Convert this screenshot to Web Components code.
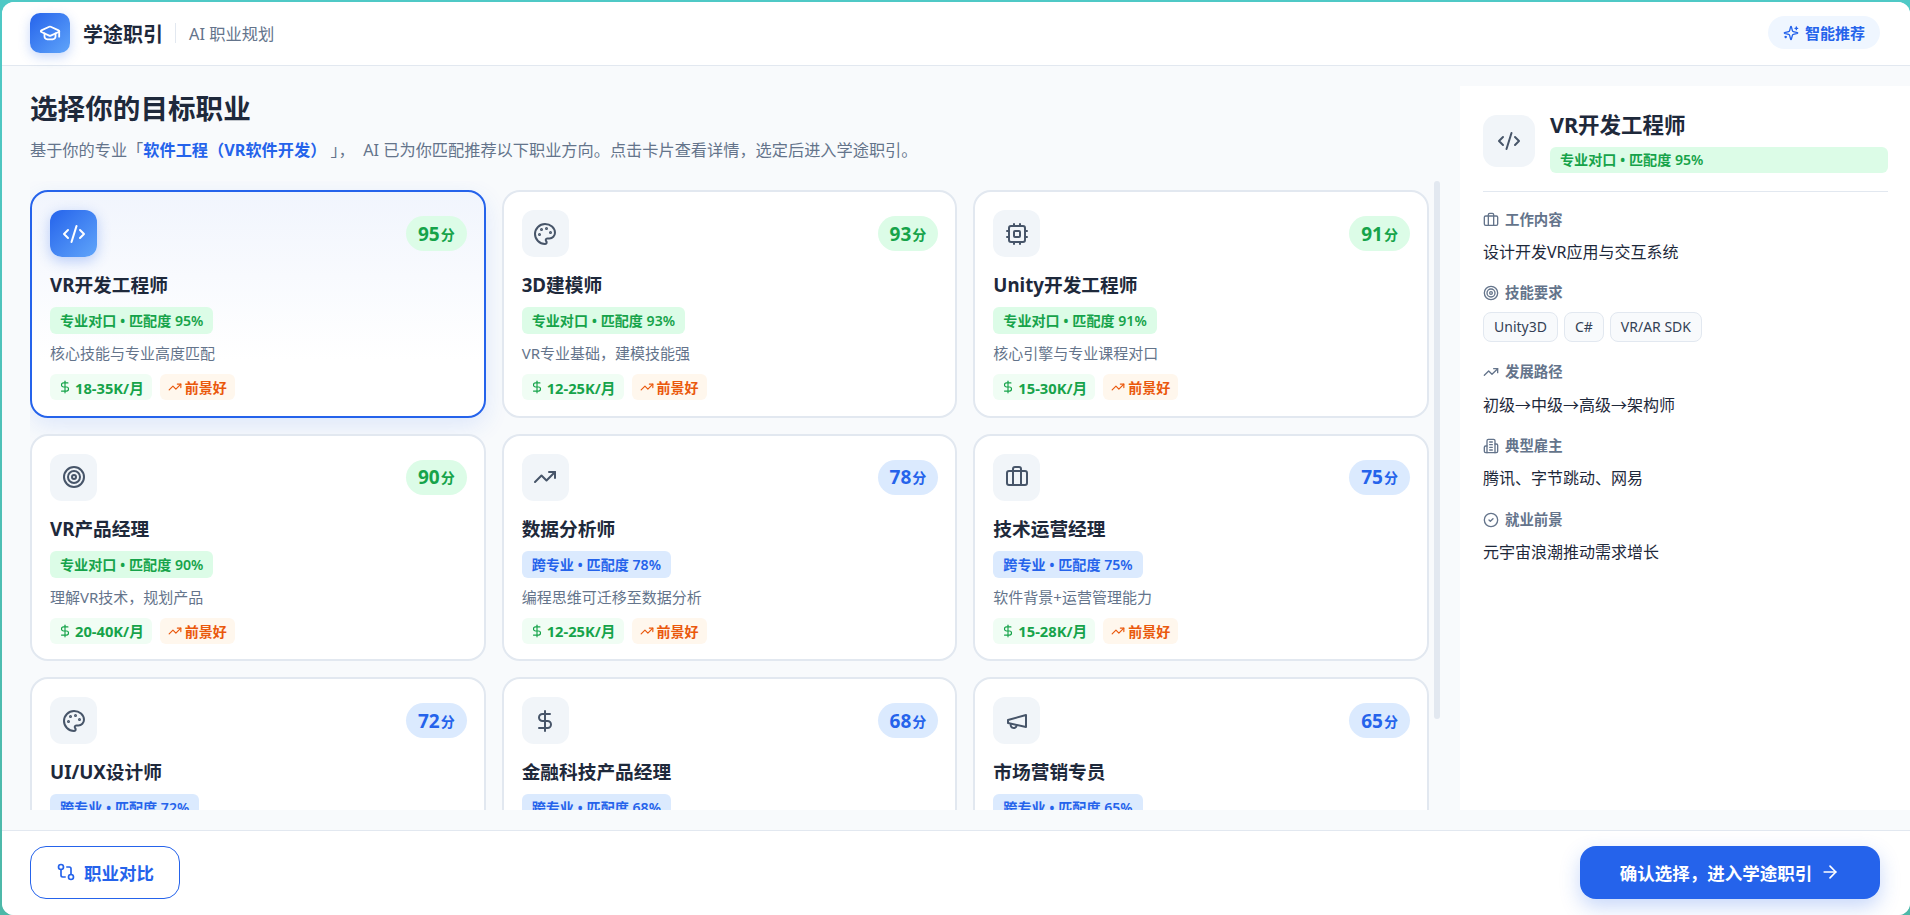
<!DOCTYPE html>
<html lang="zh-CN">
<head>
<meta charset="utf-8">
<title>学途职引</title>
<style>
  html, body { height: 100%; }
  body {
    margin: 0;
    padding: 1.5px 0 0 1.5px;
    box-sizing: border-box;
    overflow: hidden;
    background: linear-gradient(180deg, #4fc9c6, #4db8a8);
    font-family: "Noto Sans", "Noto Sans CJK SC", sans-serif;
  }
</style>
</head>
<body>
<app-shell>
  <top-bar slot="top"></top-bar>
  <career-picker slot="left"></career-picker>
  <detail-panel slot="right"></detail-panel>
  <bottom-bar slot="bottom"></bottom-bar>
</app-shell>

<script>
"use strict"

const ICONS = {
  code: `<path d="m18 16 4-4-4-4"/><path d="m6 8-4 4 4 4"/><path d="m14.5 4-5 16"/>`,
  palette: `<circle cx="13.5" cy="6.5" r=".5" fill="currentColor"/><circle cx="17.5" cy="10.5" r=".5" fill="currentColor"/><circle cx="8.5" cy="7.5" r=".5" fill="currentColor"/><circle cx="6.5" cy="12.5" r=".5" fill="currentColor"/><path d="M12 2C6.5 2 2 6.5 2 12s4.5 10 10 10c.926 0 1.648-.746 1.648-1.688 0-.437-.18-.835-.437-1.125-.29-.289-.438-.652-.438-1.125a1.64 1.64 0 0 1 1.668-1.668h1.996c3.051 0 5.555-2.503 5.555-5.554C21.965 6.012 17.461 2 12 2z"/>`,
  cpu: `<rect width="16" height="16" x="4" y="4" rx="2"/><rect width="6" height="6" x="9" y="9" rx="1"/><path d="M15 2v2"/><path d="M15 20v2"/><path d="M2 15h2"/><path d="M2 9h2"/><path d="M20 15h2"/><path d="M20 9h2"/><path d="M9 2v2"/><path d="M9 20v2"/>`,
  target: `<circle cx="12" cy="12" r="10"/><circle cx="12" cy="12" r="6"/><circle cx="12" cy="12" r="2"/>`,
  trend: `<polyline points="22 7 13.5 15.5 8.5 10.5 2 17"/><polyline points="16 7 22 7 22 13"/>`,
  briefcase: `<path d="M16 20V4a2 2 0 0 0-2-2h-4a2 2 0 0 0-2 2v16"/><rect width="20" height="14" x="2" y="6" rx="2"/>`,
  dollar: `<line x1="12" x2="12" y1="2" y2="22"/><path d="M17 5H9.5a3.5 3.5 0 0 0 0 7h5a3.5 3.5 0 0 1 0 7H6"/>`,
  megaphone: `<path d="m3 11 18-5v12L3 14v-3z"/><path d="M11.6 16.8a3 3 0 1 1-5.8-1.6"/>`,
  cap: `<path d="M21.42 10.922a1 1 0 0 0-.019-1.838L12.83 5.18a2 2 0 0 0-1.66 0L2.6 9.08a1 1 0 0 0 0 1.832l8.57 3.908a2 2 0 0 0 1.66 0z"/><path d="M22 10v6"/><path d="M6 12.5V16a6 3 0 0 0 12 0v-3.5"/>`,
  sparkles: `<path d="M9.937 15.5A2 2 0 0 0 8.5 14.063l-6.135-1.582a.5.5 0 0 1 0-.962L8.5 9.936A2 2 0 0 0 9.937 8.5l1.582-6.135a.5.5 0 0 1 .963 0L14.063 8.5A2 2 0 0 0 15.5 9.937l6.135 1.581a.5.5 0 0 1 0 .964L15.5 14.063a2 2 0 0 0-1.437 1.437l-1.582 6.135a.5.5 0 0 1-.963 0z"/><path d="M20 3v4"/><path d="M22 5h-4"/><path d="M4 17v2"/><path d="M5 18H3"/>`,
  building: `<path d="M6 22V4a2 2 0 0 1 2-2h8a2 2 0 0 1 2 2v18Z"/><path d="M6 12H4a2 2 0 0 0-2 2v6a2 2 0 0 0 2 2h2"/><path d="M18 9h2a2 2 0 0 1 2 2v9a2 2 0 0 1-2 2h-2"/><path d="M10 6h4"/><path d="M10 10h4"/><path d="M10 14h4"/><path d="M10 18h4"/>`,
  check: `<circle cx="12" cy="12" r="10"/><path d="m9 12 2 2 4-4"/>`,
  compare: `<circle cx="18" cy="18" r="3"/><circle cx="6" cy="6" r="3"/><path d="M13 6h3a2 2 0 0 1 2 2v7"/><path d="M11 18H8a2 2 0 0 1-2-2V9"/>`,
  arrow: `<path d="M5 12h14"/><path d="m12 5 7 7-7 7"/>`,
};

// the last row is cut off by the scroll area, only its top part shows
const CAREERS = [
  { title: "VR开发工程师", icon: "code", score: 95, kind: "专业对口", desc: "核心技能与专业高度匹配", salary: "18-35K/月", selected: true },
  { title: "3D建模师", icon: "palette", score: 93, kind: "专业对口", desc: "VR专业基础，建模技能强", salary: "12-25K/月" },
  { title: "Unity开发工程师", icon: "cpu", score: 91, kind: "专业对口", desc: "核心引擎与专业课程对口", salary: "15-30K/月" },
  { title: "VR产品经理", icon: "target", score: 90, kind: "专业对口", desc: "理解VR技术，规划产品", salary: "20-40K/月" },
  { title: "数据分析师", icon: "trend", score: 78, kind: "跨专业", desc: "编程思维可迁移至数据分析", salary: "12-25K/月" },
  { title: "技术运营经理", icon: "briefcase", score: 75, kind: "跨专业", desc: "软件背景+运营管理能力", salary: "15-28K/月" },
  { title: "UI/UX设计师", icon: "palette", score: 72, kind: "跨专业" },
  { title: "金融科技产品经理", icon: "dollar", score: 68, kind: "跨专业" },
  { title: "市场营销专员", icon: "megaphone", score: 65, kind: "跨专业" },
];

class UiIcon extends HTMLElement {
  connectedCallback() {
    const size = this.getAttribute("size") || 24;
    const stroke = this.getAttribute("stroke") || 2;
    this.attachShadow({ mode: "open" }).innerHTML = `
      <style>
        :host { display: inline-flex; flex: none; }
        svg { display: block; fill: none; stroke: currentColor; stroke-linecap: round; stroke-linejoin: round; }
      </style>
      <svg width="${size}" height="${size}" viewBox="0 0 24 24" stroke-width="${stroke}">${ICONS[this.getAttribute("name")]}</svg>
    `;
  }
}

class AppShell extends HTMLElement {
  constructor() {
    super();
    this.attachShadow({ mode: "open" }).innerHTML = `
      <style>
        :host {
          display: flex;
          flex-direction: column;
          height: 100%;
          background: #f8fafc;
          border-radius: 12px;
          overflow: hidden;
        }
        .middle { flex: 1; min-height: 0; display: flex; gap: 20px; padding: 20px 0 20px 28.5px; }
        .middle ::slotted(career-picker) { flex: 1; min-width: 0; }
      </style>
      <slot name="top"></slot>
      <div class="middle">
        <slot name="left"></slot>
        <slot name="right"></slot>
      </div>
      <slot name="bottom"></slot>
    `;
  }
}

class TopBar extends HTMLElement {
  constructor() {
    super();
    this.attachShadow({ mode: "open" }).innerHTML = `
      <style>
        :host {
          display: flex;
          align-items: center;
          height: 63.5px;
          flex: none;
          padding: 0 30px 0 28.5px;
          background: #fff;
          border-bottom: 1px solid #e2e8f0;
        }
        .logo {
          width: 40px; height: 40px;
          border-radius: 10px;
          display: flex; align-items: center; justify-content: center;
          color: #fff;
          background: linear-gradient(135deg, #2563eb, #60a5fa);
          box-shadow: 0 4px 12px rgba(37, 99, 235, .25);
        }
        .name { margin-left: 13px; font-size: 20px; font-weight: 700; color: #1e293b; }
        .sep { width: 1px; height: 20px; background: #e2e8f0; margin: 0 13px 0 12px; }
        .sub { font-size: 16.3px; color: #64748b; }
        .pill {
          margin: 0 0 1px auto;
          height: 33px;
          padding: 0 15px;
          display: flex; align-items: center; gap: 6px;
          border-radius: 17px;
          background: #eff6ff;
          color: #2563eb;
          font-size: 15px;
          font-weight: 600;
        }
      </style>
      <div class="logo"><ui-icon name="cap" size="22"></ui-icon></div>
      <div class="name">学途职引</div>
      <div class="sep"></div>
      <div class="sub">AI 职业规划</div>
      <div class="pill"><ui-icon name="sparkles" size="16"></ui-icon>智能推荐</div>
    `;
  }
}

class CareerCard extends HTMLElement {
  connectedCallback() {
    const score = this.getAttribute("score");
    const kind = this.getAttribute("kind");
    const salary = this.getAttribute("salary");
    const tone = kind === "跨专业" ? "blue" : "green";
    this.attachShadow({ mode: "open" }).innerHTML = `
      <style>
        :host {
          display: block;
          box-sizing: border-box;
          height: 227.5px;
          padding: 18px 17px 18px 18px;
          background: #fff;
          border: 2px solid #e2e8f0;
          border-radius: 18px;
        }
        :host([selected]) {
          border-color: #2563eb;
          background: linear-gradient(180deg, #f1f5fd, #fff 75%);
          box-shadow: 0 8px 24px rgba(37, 99, 235, .12);
        }
        .head { display: flex; align-items: center; justify-content: space-between; }
        .icon {
          width: 47px; height: 47px;
          border-radius: 12px;
          display: flex; align-items: center; justify-content: center;
          background: #f1f5f9;
          color: #475569;
        }
        :host([selected]) .icon {
          color: #fff;
          background: linear-gradient(135deg, #2563eb, #60a5fa);
          box-shadow: 0 4px 14px rgba(37, 99, 235, .3);
        }
        .score {
          height: 35px;
          padding: 0 12px;
          border-radius: 18px;
          display: flex; align-items: center;
          font-size: 19px;
          font-weight: 700;
        }
        .score small { font-size: 14px; font-weight: 600; margin-left: 1px; }
        .green { background: #dcfce7; color: #16a34a; }
        .blue { background: #dbeafe; color: #2563eb; }
        .title { margin-top: 15px; font-size: 18.7px; line-height: 26px; font-weight: 700; color: #1e293b; }
        .badge {
          display: inline-block;
          margin-top: 9px;
          height: 27px;
          line-height: 27px;
          padding: 0 10px;
          border-radius: 6px;
          font-size: 14.1px;
          font-weight: 600;
        }
        .desc { margin-top: 8px; font-size: 15px; line-height: 22px; color: #64748b; }
        .tags { margin-top: 10px; display: flex; gap: 8px; }
        .tag {
          height: 26px;
          border-radius: 6px;
          padding: 0 8px;
          display: flex; align-items: center; gap: 3px;
          font-size: 14px;
          font-weight: 700;
        }
        .salary { background: #f0fdf4; color: #16a34a; font-size: 14.7px; }
        .trend { background: #fff7ed; color: #ea580c; }
      </style>
      <div class="head">
        <div class="icon"><ui-icon name="${this.getAttribute("icon")}" size="24"></ui-icon></div>
        <div class="score ${tone}">${score}<small>分</small></div>
      </div>
      <div class="title"><slot name="title"></slot></div>
      <div class="badge ${tone}">${kind} • 匹配度 ${score}%</div>
      ${salary ? `
      <div class="desc"><slot name="desc"></slot></div>
      <div class="tags">
        <div class="tag salary"><ui-icon name="dollar" size="14"></ui-icon>${salary}</div>
        <div class="tag trend"><ui-icon name="trend" size="14"></ui-icon>前景好</div>
      </div>` : ""}
    `;
  }
}

class CareerPicker extends HTMLElement {
  constructor() {
    super();
    const cards = CAREERS.map(c => `
      <career-card icon="${c.icon}" score="${c.score}" kind="${c.kind}" ${c.salary ? `salary="${c.salary}"` : ""} ${c.selected ? "selected" : ""}>
        <span slot="title">${c.title}</span>
        ${c.desc ? `<span slot="desc">${c.desc}</span>` : ""}
      </career-card>`).join("");
    this.attachShadow({ mode: "open" }).innerHTML = `
      <style>
        :host { display: flex; flex-direction: column; min-height: 0; }
        h1 { margin: 2px 0 0; font-size: 27.6px; line-height: 40px; font-weight: 700; color: #1e293b; }
        p { margin: 10px 0 0; font-size: 16.2px; line-height: 24px; color: #64748b; white-space: pre-wrap; }
        p b { color: #2563eb; font-weight: 700; }
        .wrap { flex: 1; min-height: 0; margin-top: 19px; position: relative; display: flex; }
        .scroll {
          flex: 1;
          min-width: 0;
          padding: 9px 11px 12px 0;
          overflow-y: scroll;
          scrollbar-width: none;
        }
        .thumb { position: absolute; top: 0; right: 0; width: 6px; height: 538px; border-radius: 3px; background: #e2e8f0; }
        .grid { display: grid; grid-template-columns: repeat(3, 1fr); gap: 16px; }
      </style>
      <h1>选择你的目标职业</h1>
      <p>基于你的专业「<b>软件工程（VR软件开发）</b> 」，  AI 已为你匹配推荐以下职业方向。点击卡片查看详情，选定后进入学途职引。</p>
      <div class="wrap">
        <div class="scroll"><div class="grid">${cards}</div></div>
        <div class="thumb"></div>
      </div>
    `;
  }
}

class DetailSection extends HTMLElement {
  connectedCallback() {
    this.attachShadow({ mode: "open" }).innerHTML = `
      <style>
        :host { display: block; margin-bottom: 19.4px; }
        .label {
          display: flex; align-items: center; gap: 6px;
          font-size: 14.4px; line-height: 20px; font-weight: 600;
          color: #64748b;
        }
        .body { margin-top: 10px; font-size: 16px; line-height: 24px; color: #1e293b; }
      </style>
      <div class="label"><ui-icon name="${this.getAttribute("icon")}" size="16"></ui-icon>${this.getAttribute("label")}</div>
      <div class="body"><slot></slot></div>
    `;
  }
}

class SkillChip extends HTMLElement {
  constructor() {
    super();
    this.attachShadow({ mode: "open" }).innerHTML = `
      <style>
        :host {
          display: flex; align-items: center;
          height: 30px; box-sizing: border-box;
          padding: 0 10px;
          border: 1px solid #e2e8f0;
          border-radius: 8px;
          background: #f8fafc;
          font-size: 14px;
          color: #334155;
        }
      </style>
      <slot></slot>
    `;
  }
}

class DetailPanel extends HTMLElement {
  constructor() {
    super();
    this.attachShadow({ mode: "open" }).innerHTML = `
      <style>
        :host {
          display: block;
          flex: none;
          box-sizing: border-box;
          width: 450px;
          padding: 29px 22px 20px 23px;
          background: #fff;
        }
        .head {
          display: flex; gap: 15px;
          padding-bottom: 18px;
          margin-bottom: 18px;
          border-bottom: 1px solid #e2e8f0;
        }
        .icon {
          flex: none;
          width: 52px; height: 52px;
          border-radius: 14px;
          display: flex; align-items: center; justify-content: center;
          background: #f1f5f9;
          color: #475569;
        }
        .info { flex: 1; min-width: 0; }
        .title { font-size: 21.5px; line-height: 20px; font-weight: 700; color: #1e293b; }
        .badge {
          margin-top: 12px;
          height: 26px; line-height: 26px;
          padding: 0 10px;
          border-radius: 6px;
          background: #dcfce7; color: #16a34a;
          font-size: 14.1px; font-weight: 600;
        }
        .chips { display: flex; gap: 6px; margin-top: -1px; }
        .cjk { font-family: "Noto Sans CJK SC", sans-serif; }
      </style>
      <div class="head">
        <div class="icon"><ui-icon name="code" size="24"></ui-icon></div>
        <div class="info">
          <div class="title">VR开发工程师</div>
          <div class="badge">专业对口 • 匹配度 95%</div>
        </div>
      </div>
      <detail-section icon="briefcase" label="工作内容">设计开发VR应用与交互系统</detail-section>
      <detail-section icon="target" label="技能要求">
        <div class="chips"><skill-chip>Unity3D</skill-chip><skill-chip>C#</skill-chip><skill-chip>VR/AR SDK</skill-chip></div>
      </detail-section>
      <detail-section icon="trend" label="发展路径"><span class="cjk">初级→中级→高级→架构师</span></detail-section>
      <detail-section icon="building" label="典型雇主">腾讯、字节跳动、网易</detail-section>
      <detail-section icon="check" label="就业前景">元宇宙浪潮推动需求增长</detail-section>
    `;
  }
}

class BottomBar extends HTMLElement {
  constructor() {
    super();
    this.attachShadow({ mode: "open" }).innerHTML = `
      <style>
        :host {
          display: flex;
          align-items: center;
          justify-content: space-between;
          flex: none;
          height: 85px;
          box-sizing: border-box;
          padding: 0 30px 2px 28.5px;
          background: #fff;
          border-top: 1px solid #e2e8f0;
        }
        .btn {
          height: 53px;
          box-sizing: border-box;
          border-radius: 16px;
          display: flex; align-items: center; justify-content: center;
          font-family: inherit;
          font-size: 17.5px;
          font-weight: 700;
          gap: 8px;
        }
        .ghost { width: 150px; background: #fff; color: #2563eb; border: 1.5px solid #2563eb; }
        .primary {
          width: 300px;
          background: #2563eb; color: #fff; border: 0;
          box-shadow: 0 8px 20px rgba(37, 99, 235, .25);
        }
      </style>
      <button class="btn ghost"><ui-icon name="compare" size="20"></ui-icon>职业对比</button>
      <button class="btn primary">确认选择，进入学途职引<ui-icon name="arrow" size="20"></ui-icon></button>
    `;
  }
}

customElements.define("ui-icon", UiIcon);
customElements.define("detail-section", DetailSection);
customElements.define("skill-chip", SkillChip);
customElements.define("career-card", CareerCard);
customElements.define("top-bar", TopBar);
customElements.define("career-picker", CareerPicker);
customElements.define("detail-panel", DetailPanel);
customElements.define("bottom-bar", BottomBar);
customElements.define("app-shell", AppShell);
</script>
</body>
</html>
